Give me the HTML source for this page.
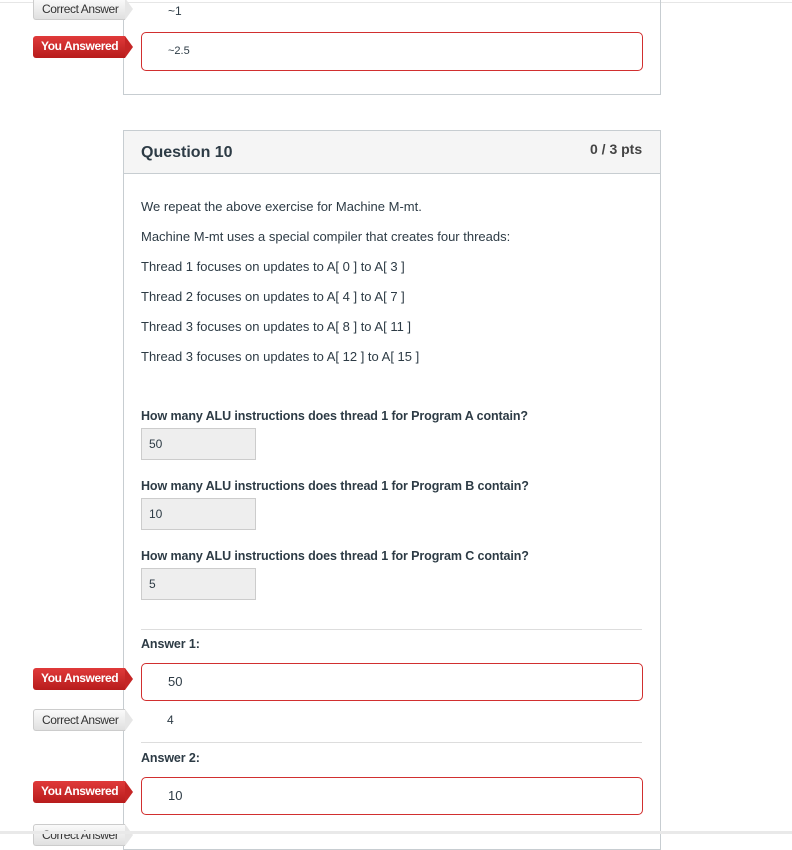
<!DOCTYPE html>
<html><head><style>
body{margin:0;width:792px;height:834px;overflow:hidden;background:#fff;font-family:"Liberation Sans",sans-serif;color:#2d3b45;position:relative}
.a{position:absolute}
.tag{position:absolute;height:22px;line-height:21px;font-size:12px;letter-spacing:-0.4px;padding-left:8px;width:92px;box-sizing:border-box}
.you{background:linear-gradient(#e03a3a,#b71c1c);color:#fff;font-weight:bold;border-radius:3px 0 0 3px}
.you:after{content:"";position:absolute;right:-8px;top:0;border-left:8px solid #c52525;border-top:11px solid transparent;border-bottom:11px solid transparent}
.cor{background:linear-gradient(#fafafa,#e0e0e0);color:#333;border:1px solid #ccc;border-right:none;border-radius:3px 0 0 3px}
.cor:after{content:"";position:absolute;right:-8px;top:-1px;border-left:8px solid #e6e6e6;border-top:11px solid transparent;border-bottom:11px solid transparent}
.rb{position:absolute;left:141px;width:502px;border:1px solid #d12f2f;border-radius:5px;height:38px;box-sizing:border-box;font-size:13px;line-height:36px;padding-left:26px}
.t{position:absolute;left:141px;font-size:13px}
.q{position:absolute;left:141px;font-size:12.5px;font-weight:bold;letter-spacing:-0.1px}
.in{position:absolute;left:141px;width:115px;height:32px;background:#eee;border:1px solid #ccc;box-sizing:border-box;font-size:12px;line-height:30px;padding-left:7px}
</style></head><body>
<div class="a" style="left:0;top:2px;width:792px;height:1px;background:#e6e6e6"></div>
<div class="a" style="left:123px;top:0;width:538px;height:95px;border:1px solid #c7cdd1;border-top:none;box-sizing:border-box"></div>
<div class="tag cor" style="left:33px;top:-2px">Correct Answer</div>
<div class="t" style="left:168px;top:4px;font-size:12px">~1</div>
<div class="tag you" style="left:33px;top:36px">You Answered</div>
<div class="rb" style="top:32px;height:39px;font-size:11px">~2.5</div>

<div class="a" style="left:123px;top:130px;width:538px;height:720px;border:1px solid #c7cdd1;box-sizing:border-box"></div>
<div class="a" style="left:124px;top:131px;width:536px;height:42px;background:#f5f5f5;border-bottom:1px solid #c7cdd1"></div>
<div class="a" style="left:141px;top:144px;font-size:16px;font-weight:bold">Question 10</div>
<div class="a" style="left:590px;top:141px;font-size:14px;font-weight:bold;color:#444">0 / 3 pts</div>

<div class="t" style="top:199px">We repeat the above exercise for Machine M-mt.</div>
<div class="t" style="top:229px">Machine M-mt uses a special compiler that creates four threads:</div>
<div class="t" style="top:259px">Thread 1 focuses on updates to A[ 0 ] to A[ 3 ]</div>
<div class="t" style="top:289px">Thread 2 focuses on updates to A[ 4 ] to A[ 7 ]</div>
<div class="t" style="top:319px">Thread 3 focuses on updates to A[ 8 ] to A[ 11 ]</div>
<div class="t" style="top:349px">Thread 3 focuses on updates to A[ 12 ] to A[ 15 ]</div>

<div class="q" style="top:409px">How many ALU instructions does thread 1 for Program A contain?</div>
<div class="in" style="top:428px">50</div>
<div class="q" style="top:479px">How many ALU instructions does thread 1 for Program B contain?</div>
<div class="in" style="top:498px">10</div>
<div class="q" style="top:549px">How many ALU instructions does thread 1 for Program C contain?</div>
<div class="in" style="top:568px">5</div>

<div class="a" style="left:141px;top:629px;width:501px;height:1px;background:#ddd"></div>
<div class="q" style="top:637px">Answer 1:</div>
<div class="tag you" style="left:33px;top:668px">You Answered</div>
<div class="rb" style="top:663px">50</div>
<div class="tag cor" style="left:33px;top:709px">Correct Answer</div>
<div class="t" style="left:167px;top:713px;font-size:12px">4</div>
<div class="a" style="left:141px;top:742px;width:501px;height:1px;background:#ddd"></div>
<div class="q" style="top:751px">Answer 2:</div>
<div class="tag you" style="left:33px;top:781px">You Answered</div>
<div class="rb" style="top:777px">10</div>
<div class="tag cor" style="left:33px;top:824px">Correct Answer</div>
<div class="a" style="left:0;top:831px;width:792px;height:3px;background:#e9e9e9"></div>
</body></html>
